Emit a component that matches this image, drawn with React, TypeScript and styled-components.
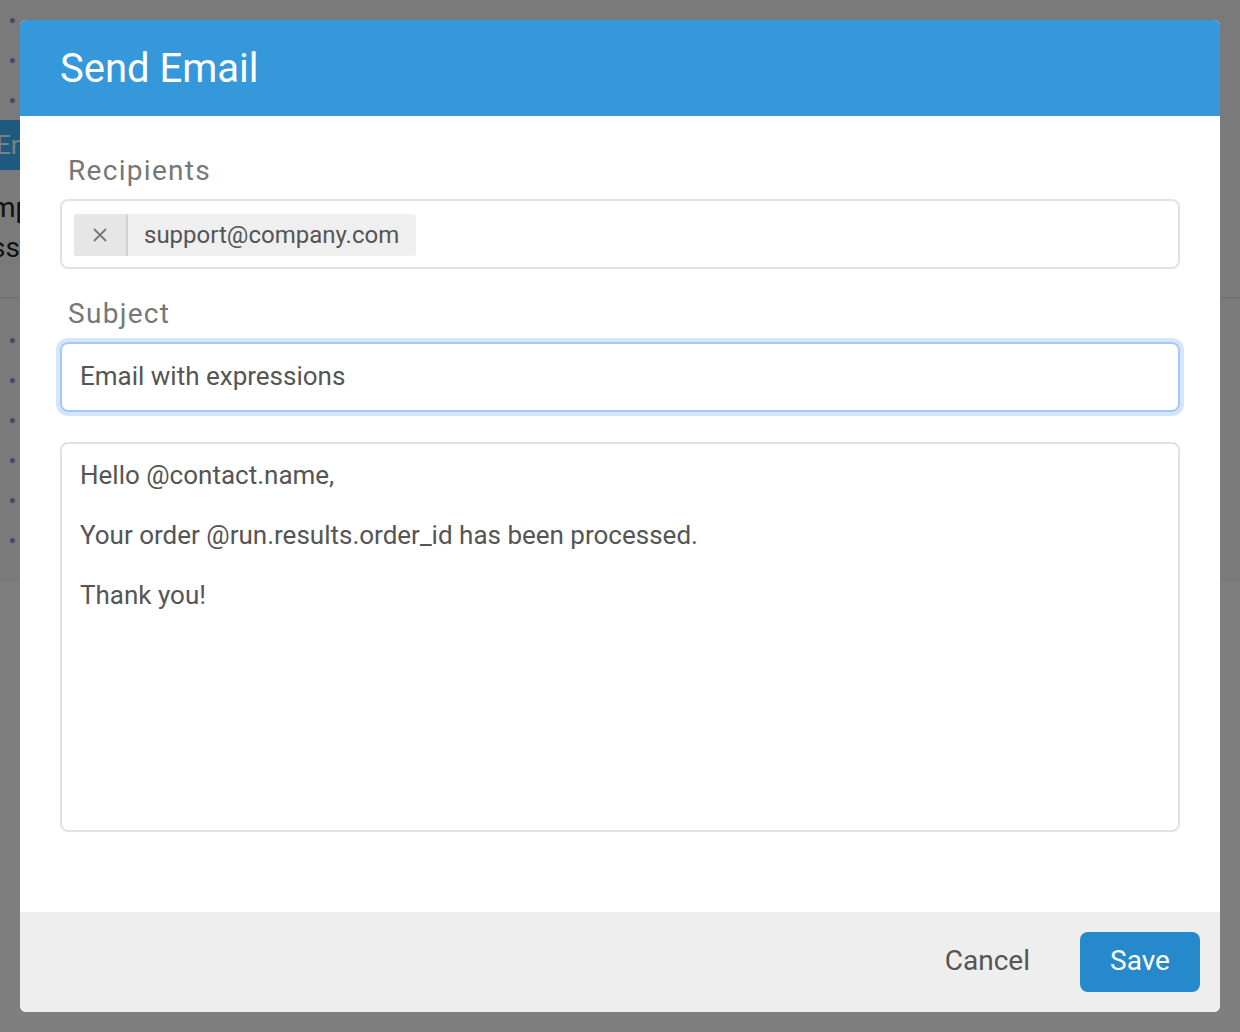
import React from "react";
import styled, { createGlobalStyle } from "styled-components";

const Global = createGlobalStyle`
  html, body { margin: 0; padding: 0; }
  body { font-family: Roboto, "Liberation Sans", sans-serif; background: #fff; }
  * { box-sizing: border-box; }
`;

const Page = styled.div`
  width: 1240px;
  height: 1032px;
  position: relative;
  overflow: hidden;
  background: #fff;
`;

const BackPanel = styled.div`
  height: 582px;
  background: #f4f4f4;
  display: flex;
  flex-direction: column;
`;

const DotRow = styled.div`
  height: 40px;
  display: flex;
  align-items: center;
  padding-left: 10px;
  flex-shrink: 0;
`;

const Dot = styled.span`
  width: 5px;
  height: 5px;
  border-radius: 50%;
  background: #7a9cc0;
`;

const BackTab = styled.div`
  height: 50px;
  width: 80px;
  background: #3cb4ff;
  color: #fff;
  font-size: 26px;
  display: flex;
  align-items: center;
  text-indent: -4px;
  flex-shrink: 0;
`;

const BackTextBlock = styled.div`
  padding-top: 17px;
  height: 128px;
  border-bottom: 1px solid #dcdcdc;
  margin-bottom: 22px;
  flex-shrink: 0;
`;

const BackText = styled.div`
  height: 40px;
  display: flex;
  align-items: center;
  font-size: 28px;
  color: #222;
  text-indent: -9px;
`;

const Overlay = styled.div`
  position: absolute;
  inset: 0;
  background: rgba(0, 0, 0, 0.5);
  padding: 20px;
`;

const Modal = styled.div`
  width: 1200px;
  height: 992px;
  background: #fff;
  border-radius: 6px;
  overflow: hidden;
  display: flex;
  flex-direction: column;
`;

const Header = styled.div`
  height: 96px;
  background: #3498db;
  display: flex;
  align-items: center;
  padding-left: 40px;
  flex-shrink: 0;
`;

const Title = styled.h1`
  margin: 0;
  font-weight: 400;
  font-size: 40px;
  color: #fff;
  padding-top: 1px;
`;

const Body = styled.div`
  flex: 1;
  padding: 40px 40px 0 40px;
  display: flex;
  flex-direction: column;
`;

const Label = styled.div`
  font-size: 28px;
  color: #777;
  letter-spacing: 1.3px;
  padding-left: 8px;
  height: 30px;
  line-height: 30px;
  margin-bottom: 13px;
`;

const FieldBox = styled.div<{ $focused?: boolean }>`
  height: 70px;
  border: 2px solid ${(p) => (p.$focused ? "#a6c8f8" : "#e2e2e2")};
  border-radius: 8px;
  box-shadow: ${(p) => (p.$focused ? "0 0 0 4px #d5e5fc" : "none")};
  display: flex;
  align-items: center;
  padding: 0 12px;
  margin-bottom: 30px;
  flex-shrink: 0;
`;

const Chip = styled.div`
  height: 42px;
  margin-top: 1px;
  display: flex;
  align-items: stretch;
  background: #efefef;
  border-radius: 3px;
  overflow: hidden;
`;

const ChipRemove = styled.div`
  width: 54px;
  background: #e6e6e6;
  border-right: 2px solid #d2d2d2;
  display: flex;
  align-items: center;
  justify-content: center;
`;

const ChipText = styled.div`
  display: flex;
  align-items: center;
  padding: 0 17px 0 16px;
  font-size: 24px;
  color: #555;
`;

const InputText = styled.div`
  font-size: 26px;
  color: #555;
  padding-left: 6px;
  padding-bottom: 3px;
`;

const TextArea = styled.div`
  height: 390px;
  border: 2px solid #e2e2e2;
  border-radius: 8px;
  padding: 16px 18px;
  font-size: 26px;
  line-height: 30px;
  color: #555;
  white-space: pre-wrap;
  flex-shrink: 0;
`;

const Footer = styled.div`
  height: 100px;
  background: #eeeeee;
  display: flex;
  align-items: center;
  justify-content: flex-end;
  padding-right: 20px;
  gap: 50px;
  flex-shrink: 0;
`;

const CancelButton = styled.button`
  border: none;
  background: transparent;
  font-family: inherit;
  font-size: 28px;
  color: #555;
  padding: 0 0 3px 0;
  cursor: pointer;
`;

const SaveButton = styled.button`
  border: none;
  width: 120px;
  height: 60px;
  border-radius: 8px;
  background: #2589cc;
  color: #fff;
  font-family: inherit;
  font-size: 28px;
  padding: 0 0 3px 0;
  cursor: pointer;
`;

export default function App() {
  return (
    <Page>
      <Global />
      <BackPanel>
        <DotRow><Dot /></DotRow>
        <DotRow><Dot /></DotRow>
        <DotRow><Dot /></DotRow>
        <BackTab>En</BackTab>
        <BackTextBlock>
          <BackText>mp</BackText>
          <BackText>ss</BackText>
        </BackTextBlock>
        <DotRow><Dot /></DotRow>
        <DotRow><Dot /></DotRow>
        <DotRow><Dot /></DotRow>
        <DotRow><Dot /></DotRow>
        <DotRow><Dot /></DotRow>
        <DotRow><Dot /></DotRow>
      </BackPanel>
      <Overlay>
        <Modal>
          <Header>
            <Title>Send Email</Title>
          </Header>
          <Body>
            <Label>Recipients</Label>
            <FieldBox>
              <Chip>
                <ChipRemove>
                  <svg width="16" height="16" viewBox="0 0 16 16">
                    <path d="M2 2 L14 14 M14 2 L2 14" stroke="#777" strokeWidth="1.8" />
                  </svg>
                </ChipRemove>
                <ChipText>support@company.com</ChipText>
              </Chip>
            </FieldBox>
            <Label>Subject</Label>
            <FieldBox $focused>
              <InputText>Email with expressions</InputText>
            </FieldBox>
            <TextArea>{"Hello @contact.name,\n\nYour order @run.results.order_id has been processed.\n\nThank you!"}</TextArea>
          </Body>
          <Footer>
            <CancelButton>Cancel</CancelButton>
            <SaveButton>Save</SaveButton>
          </Footer>
        </Modal>
      </Overlay>
    </Page>
  );
}
